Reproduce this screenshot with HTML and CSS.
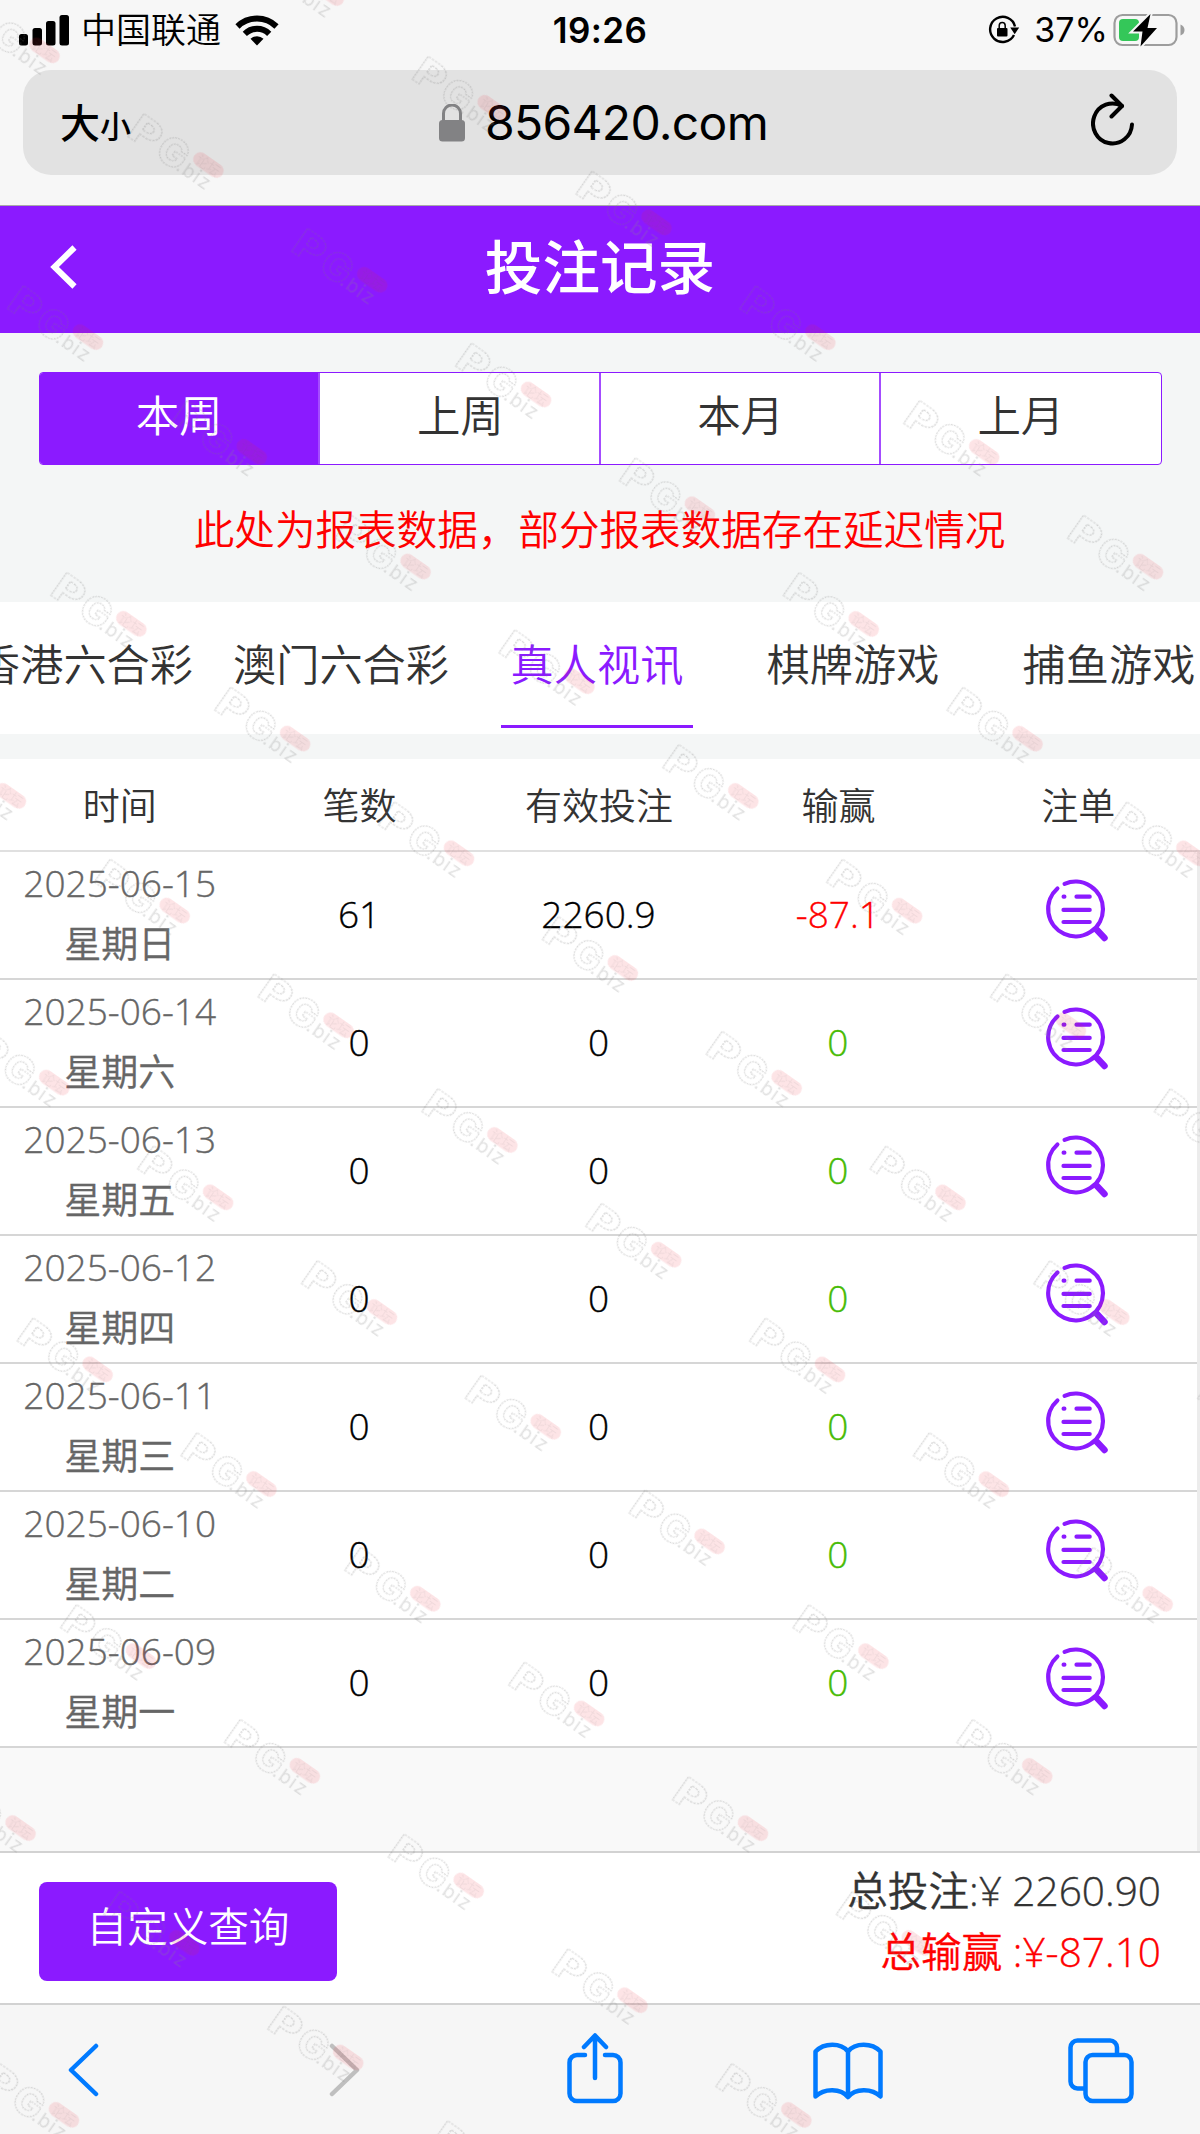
FILE: index.html
```html
<!DOCTYPE html>
<html lang="zh-CN">
<head>
<meta charset="utf-8">
<title>投注记录</title>
<link rel="stylesheet" href="styles.css">
</head>
<body>
<svg class="defs" width="0" height="0" aria-hidden="true">
  <symbol id="detail" viewBox="0 0 66 66">
    <g fill="none" stroke="#8b1aff" stroke-width="4.2" stroke-linecap="round">
      <path d="M20.600 6.900A27.400 27.400 0 1 1 13.400 11.500"/>
      <path d="M19.600 19.700h.8M32.500 19.700h13.200M19.500 32.900h26.200M19.500 45h26.200"/>
      <path d="M53 53l7.500 8" stroke-width="6.500"/>
    </g>
  </symbol>
</svg>
<div class="phone">
  <div class="status">
    <div class="status-left">
      <svg width="50" height="31" viewBox="0 0 50 31"><rect x="0" y="19" width="9" height="11.500" rx="2.500"/><rect x="13.500" y="13" width="9.500" height="17.500" rx="2.500"/><rect x="27" y="6" width="9.500" height="24.500" rx="2.500"/><rect x="40.500" y="0" width="9.500" height="30.500" rx="2.500"/></svg>
      <span class="carrier">中国联通</span>
      <svg class="wifi" width="44" height="32" viewBox="0 0 44 32"><g fill="none" stroke="#000" stroke-width="6"><path d="M2.500 12.500a28 28 0 0 1 39 0"/><path d="M9.800 19.800a17.500 17.500 0 0 1 24.400 0"/></g><path d="M22 31.500l-6.500-6.700a9.500 9.500 0 0 1 13 0z"/></svg>
    </div>
    <div class="time">19:26</div>
    <div class="status-right">
      <svg width="32" height="30" viewBox="0 0 32 30"><path d="M26 20A12.600 12.600 0 1 1 27 11.500" fill="none" stroke="#000" stroke-width="2.400"/><path d="M22.200 12.500h9l-4.500 6.800z"/><rect x="9" y="13" width="10.500" height="8.500" rx="1"/><path d="M11.200 13v-2.200a3 3.200 0 0 1 6 0V13" fill="none" stroke="#000" stroke-width="1.500"/></svg>
      <span class="percent">37%</span>
      <svg width="72" height="36" viewBox="0 0 72 36"><rect x="1.500" y="3" width="62" height="30" rx="8" fill="none" stroke="#9d9d9d" stroke-width="2.200"/><path d="M67.500 12.500q4 1.500 4 5.500t-4 5.500z" fill="#9d9d9d"/><rect x="6" y="7" width="20" height="22" rx="4" fill="#34c759"/><path d="M37.500 2L20 19.500h9.500l-2 15L44 16H34.500z" stroke="#f7f7f7" stroke-width="4"/><path d="M37.500 2L20 19.500h9.500l-2 15L44 16H34.500z"/></svg>
    </div>
  </div>
  <div class="address-wrap">
    <div class="address">
      <span class="textsize"><b>大</b><b class="small">小</b></span>
      <span class="host"><svg width="26" height="38" viewBox="0 0 26 38"><rect y="16" width="26" height="21.500" rx="3.500" fill="#828284"/><path d="M4.500 17v-7.500a8.500 8.500 0 0 1 17 0V17" fill="none" stroke="#828284" stroke-width="3"/></svg><span>856420.com</span></span>
      <svg class="reload" width="44" height="54" viewBox="0 0 44 54"><g fill="none" stroke="#000" stroke-width="4" stroke-linecap="round" stroke-linejoin="round"><path d="M41 31.500A19.500 20 0 1 1 31 13"/><path d="M20.500 2.500L31 13 20.500 23.500"/></g></svg>
    </div>
  </div>
  <header class="title-bar">
    <svg width="27" height="44" viewBox="0 0 27 44"><path d="M24.500 2.500L4.500 22l20 19.500" fill="none" stroke="#fff" stroke-width="6"/></svg>
    <h1>投注记录</h1>
  </header>
  <section class="filters">
    <div class="segments"><div class="on">本周</div><div>上周</div><div>本月</div><div>上月</div></div>
    <p class="notice">此处为报表数据，部分报表数据存在延迟情况</p>
  </section>
  <nav class="categories"><a>香港六合彩</a><a>澳门六合彩</a><a class="current">真人视讯</a><a>棋牌游戏</a><a>捕鱼游戏</a></nav>
  <main class="report">
    <div class="row head"><div>时间</div><div>笔数</div><div>有效投注</div><div>输赢</div><div>注单</div></div>
    <div class="rows">
      <div class="row"><div class="date">2025-06-15<br>星期日</div><div>61</div><div>2260.9</div><div class="loss">-87.1</div><div><svg class="detail"><use href="#detail"/></svg></div></div>
      <div class="row"><div class="date">2025-06-14<br>星期六</div><div>0</div><div>0</div><div class="even">0</div><div><svg class="detail"><use href="#detail"/></svg></div></div>
      <div class="row"><div class="date">2025-06-13<br>星期五</div><div>0</div><div>0</div><div class="even">0</div><div><svg class="detail"><use href="#detail"/></svg></div></div>
      <div class="row"><div class="date">2025-06-12<br>星期四</div><div>0</div><div>0</div><div class="even">0</div><div><svg class="detail"><use href="#detail"/></svg></div></div>
      <div class="row"><div class="date">2025-06-11<br>星期三</div><div>0</div><div>0</div><div class="even">0</div><div><svg class="detail"><use href="#detail"/></svg></div></div>
      <div class="row"><div class="date">2025-06-10<br>星期二</div><div>0</div><div>0</div><div class="even">0</div><div><svg class="detail"><use href="#detail"/></svg></div></div>
      <div class="row"><div class="date">2025-06-09<br>星期一</div><div>0</div><div>0</div><div class="even">0</div><div><svg class="detail"><use href="#detail"/></svg></div></div>
    </div>
  </main>
  <footer class="summary">
    <button>自定义查询</button>
    <div class="totals"><div>总投注:¥ 2260.90</div><div class="total-loss">总输赢 :¥-87.10</div></div>
  </footer>
  <nav class="toolbar">
    <svg class="back" width="31" height="54" viewBox="0 0 31 54"><path d="M28 3L3 27l25 24"/></svg>
    <svg class="forward" width="31" height="54" viewBox="0 0 31 54"><path d="M3 3l25 24L3 51"/></svg>
    <svg class="share" width="56" height="71" viewBox="0 0 56 71"><path d="M18 22H10a7.500 7.500 0 0 0-7.500 7.500v31A7.500 7.500 0 0 0 10 68h36a7.500 7.500 0 0 0 7.500-7.500v-31A7.500 7.500 0 0 0 46 22h-8M28 45V3M17 14L28 2.500 39 14"/></svg>
    <svg class="book" width="70" height="58" viewBox="0 0 70 58"><path d="M35 9.500C28 .5 11 .5 2.500 9.500v45C11 46 28 46 35 55c7-9 24-9 32.500-.5v-45C59 .5 42 .5 35 9.500zM35 9.500V55"/></svg>
    <svg class="tabs" width="66" height="66" viewBox="0 0 66 66"><rect x="17.500" y="17" width="46" height="46" rx="7"/><path d="M49 16V9.500A7 7 0 0 0 42 2.500H9.500a7 7 0 0 0-7 7v34a7 7 0 0 0 7 7h7"/></svg>
  </nav>
  <svg class="watermark" width="1200" height="2134">
    <defs>
      <pattern id="wm" width="200" height="210" patternUnits="userSpaceOnUse">
        <text class="wm-big" x="8" y="37.500" textLength="31" lengthAdjust="spacingAndGlyphs">P</text><text class="wm-big wm-g" x="42" y="39">G</text>
        <rect x="76" y="8" width="34" height="14.400" rx="7.200" fill="#f01e32" fill-opacity=".12"/>
        <text class="wm-cn" x="80" y="20">论坛</text>
        <text class="wm-biz" x="68" y="38">.biz</text>
      </pattern>
    </defs>
    <g transform="translate(143.400 113.200) rotate(35) translate(-10 -10)">
      <rect x="-600" y="-210" width="2400" height="2310" fill="url(#wm)"/>
    </g>
  </svg>
</div>
</body>
</html>
```
FILE: styles.css
```css
* { box-sizing: border-box; }
body { margin: 0; background: #f9f9f9; }
svg { display: block; flex: none; }
.defs { position: absolute; }

.phone {
  position: relative;
  width: 1200px;
  height: 2134px;
  overflow: hidden;
  display: flex;
  flex-direction: column;
  font-family: "Open Sans", "Noto Sans CJK SC", sans-serif;
  font-weight: 350;
  color: #333;
}

.status {
  height: 70px;
  padding: 0 15px 10px 19px;
  background: #f7f7f7;
  display: grid;
  grid-template-columns: 1fr auto 1fr;
  align-items: center;
  color: #000;
}
.status-left, .status-right { display: flex; align-items: center; }
.status-right { justify-content: flex-end; }
.carrier { font-size: 35px; line-height: 40px; margin: 0 14px 0 12px; }
.time { margin-right: 4px; font: 600 35px/40px Inter, sans-serif; letter-spacing: .4px; }
.percent { font: 400 34px/40px Inter, sans-serif; margin: 0 5px 0 14px; }

.address-wrap {
  height: 136px;
  padding: 0 23px;
  background: #f7f7f7;
  border-bottom: 1px solid #a9a9a9;
}
.address {
  height: 105px;
  padding: 0 42px 0 37px;
  border-radius: 28px;
  background: #e2e2e2;
  color: #000;
  display: grid;
  grid-template-columns: 1fr auto 1fr;
  align-items: center;
}
.textsize { font-size: 40px; line-height: 50px; padding-top: 3px; }
.textsize b { font-weight: 500; }
.textsize .small { font-size: 31px; }
.host { display: flex; align-items: center; gap: 20px; margin-left: 12px; font: 400 48px/60px Inter, sans-serif; letter-spacing: -.7px; }
.reload { justify-self: end; margin-bottom: 5px; }

.title-bar {
  height: 127px;
  padding: 0 50px 5px;
  background: #8b1aff;
  color: #fff;
  display: grid;
  grid-template-columns: 1fr auto 1fr;
  align-items: center;
}
.title-bar h1 { margin: -1px 0 0; font-size: 57.600px; line-height: 80px; font-weight: 500; }

.filters { height: 269px; padding: 39px 38px 0 39px; background: #f4f6f6; }
.segments {
  height: 93px;
  border: 1px solid #8b1aff;
  border-radius: 4px;
  background: #fff;
  overflow: hidden;
  display: grid;
  grid-template-columns: repeat(4, 1fr);
  font-size: 43.500px;
  line-height: 85px;
  text-align: center;
}
.segments div + div { margin-left: -2px; border-left: 2px solid #a44cff; }
.segments .on { padding-right: 2px; background: #8b1aff; color: #fff; }
.notice { margin: 35px 0 0; padding-right: 2px; font-size: 40.600px; line-height: 60px; text-align: center; color: #f00; }

.categories { height: 132px; background: #fff; display: flex; overflow: hidden; }
.categories a {
  flex: none;
  width: 192px;
  margin-right: 64px;
  height: 126px;
  line-height: 126px;
  font-size: 43.200px;
  display: flex;
  justify-content: center;
  white-space: nowrap;
}
.categories a:first-child { margin-left: -11px; }
.categories .current { color: #8b1aff; border-bottom: 3px solid #8b1aff; }

.report { height: 1117px; border-top: 25px solid #f4f6f6; display: flex; flex-direction: column; }
.row {
  height: 128px;
  padding-bottom: 6px;
  background: #fff;
  border-bottom: 2px solid #d6d6d6;
  display: grid;
  grid-template-columns: repeat(5, 1fr);
  align-items: center;
  justify-items: center;
  font-size: 37px;
  line-height: 61px;
  text-align: center;
  color: #000;
  -webkit-text-stroke: .35px;
}
.head { height: 93px; padding: 1px 2px 0 0; color: #333; border-color: #e0e0e0; flex: none; -webkit-text-stroke: 0; }
.rows { flex: 1; border-right: 3px solid #ececec; }
.date { color: #666; }
.loss { color: #f00; }
.even { color: #47bb05; }
.detail { width: 66px; height: 66px; margin-bottom: 6px; }

.summary {
  height: 154px;
  padding: 0 39px;
  border-top: 2px solid #d2d2d2;
  border-bottom: 2px solid #d2d2d2;
  background: #fff;
  display: flex;
  justify-content: space-between;
}
.summary button {
  width: 298px;
  height: 99px;
  margin-top: 29px;
  padding: 0 0 9px;
  border: 0;
  border-radius: 8px;
  background: #8b1aff;
  color: #fff;
  font: 350 40.600px/60px "Open Sans", "Noto Sans CJK SC", sans-serif;
}
.totals { padding-top: 7px; font-size: 40.600px; line-height: 61px; text-align: right; white-space: pre; -webkit-text-stroke: .35px; }
.total-loss { color: #f00; }

.toolbar { flex: 1; background: #f6f6f6; display: flex; align-items: flex-start; }
.toolbar svg { fill: none; stroke: #007aff; stroke-width: 4.500; stroke-linecap: round; stroke-linejoin: round; }
.toolbar .back { margin: 38px 0 0 68px; }
.toolbar .forward { margin: 38px 0 0 230px; stroke: #bfbfbf; }
.toolbar .share { margin: 28px 0 0 207px; }
.toolbar .book { margin: 37px 0 0 190px; }
.toolbar .tabs { margin: 33px 0 0 185px; }

.watermark { position: absolute; left: 0; top: 0; pointer-events: none; }
.wm-big {
  font: 800 38px Inter, sans-serif;
  fill: none;
  stroke: #777;
  stroke-opacity: .28;
  stroke-width: 1.200;
  stroke-dasharray: 2 1;
}
.wm-g { font-size: 40px; }
.wm-cn { font: 400 13px "Noto Sans CJK SC", sans-serif; fill: #555; fill-opacity: .08; }
.wm-biz { font: 400 19px Inter, sans-serif; letter-spacing: 1.500px; fill: #888; fill-opacity: .25; }
```
